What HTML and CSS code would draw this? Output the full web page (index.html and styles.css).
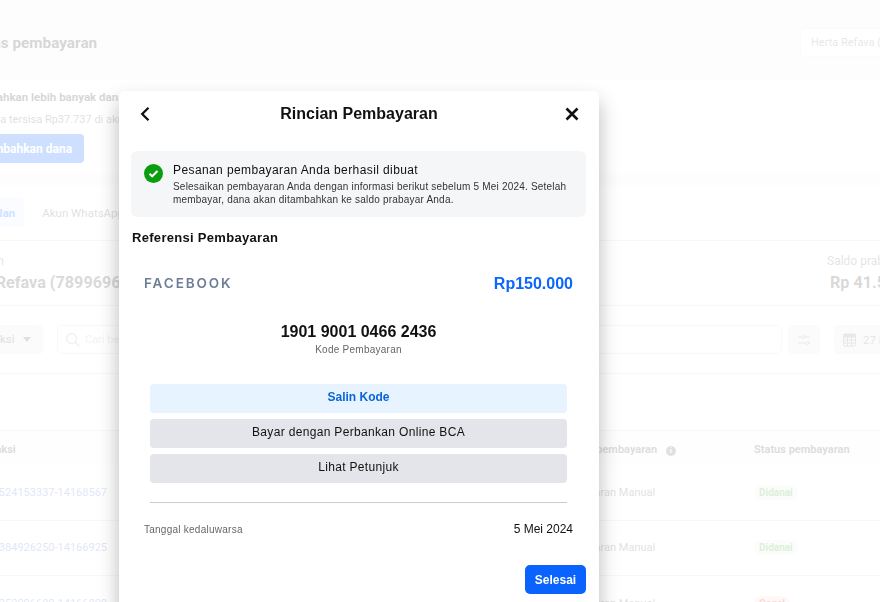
FILE: index.html
```html
<!DOCTYPE html>
<html lang="en">
  <head>
    <meta charset="UTF-8" />
    <meta name="viewport" content="width=device-width, initial-scale=1.0" />
    <title>Rincian Pembayaran</title>
    <link rel="stylesheet" href="styles.css">
  </head>
  <body>
    <div class="page">
      <header class="top-bar">
        <h1>Aktivitas pembayaran</h1>
        <div class="account-select">Herta Refava (7899696)</div>
      </header>

      <section class="banner">
        <div class="banner-title">Tambahkan lebih banyak dana</div>
        <div class="banner-text">Dana tersisa Rp37.737 di akun Anda</div>
        <button class="add-btn">Tambahkan dana</button>
      </section>

      <section class="tabs">
        <div class="tab tab-active">Penjualan</div>
        <div class="tab">Akun WhatsApp</div>
      </section>

      <section class="account-row">
        <div>
          <div class="account-label">Nama akun</div>
          <div class="account-name">Herta Refava (7899696)</div>
        </div>
        <div class="balance">
          <div class="account-label">Saldo prabayar</div>
          <div class="account-name balance-value">Rp 41.500</div>
        </div>
      </section>

      <section class="filters">
        <div class="filter-type">Transaksi <span class="caret"></span></div>
        <div class="search">
          <svg width="14" height="14" viewBox="0 0 14 14" fill="none" stroke="#a8a8a8" stroke-width="1.1"><circle cx="5.6" cy="5.6" r="5"/><path d="M9.2 9.2 13.5 13.5"/></svg>
          <span>Cari berdasarkan ID transaksi</span>
        </div>
        <div class="icon-btn">
          <svg width="14" height="12" viewBox="0 0 14 12" fill="none" stroke="#9a9a9a" stroke-width="1"><path d="M1 3h4M8 3h5M1 9h8M12 9h1"/><circle cx="6.5" cy="3" r="1.5"/><circle cx="10.5" cy="9" r="1.5"/></svg>
        </div>
        <div class="date-btn">
          <svg width="13" height="14" viewBox="0 0 13 14" fill="none" stroke="#8a8a8a" stroke-width="1"><rect x=".5" y="1" width="12" height="12" rx="1.5"/><path d="M.5 1.5h12V4H.5z" fill="#8a8a8a"/><path d="M.5 7h12M.5 10h12M4.5 4v9M8.5 4v9"/></svg>
          <span>27 Feb 2024</span>
        </div>
      </section>

      <div class="spacer"></div>

      <section class="table">
        <div class="table-row table-head">
          <div>ID transaksi</div>
          <div class="col-method">Metode pembayaran <span class="info-dot">i</span></div>
          <div>Status pembayaran</div>
        </div>
        <div class="table-row">
          <div class="tx-id">1714524153337-14168567</div>
          <div class="col-method">Pembayaran Manual</div>
          <div><span class="badge badge-ok">Didanai</span></div>
        </div>
        <div class="table-row">
          <div class="tx-id">1714384926250-14166925</div>
          <div class="col-method">Pembayaran Manual</div>
          <div><span class="badge badge-ok">Didanai</span></div>
        </div>
        <div class="table-row">
          <div class="tx-id">1714252096680-14166808</div>
          <div class="col-method">Pembayaran Manual</div>
          <div><span class="badge badge-fail">Gagal</span></div>
        </div>
      </section>
    </div>

    <div class="overlay"></div>

    <div class="modal">
      <div class="modal-head">
        <svg width="16" height="16" viewBox="0 0 16 16" fill="none" stroke="#111" stroke-width="2.3"><path d="M10.5 1.7 4.2 8l6.3 6.3"/></svg>
        <h2>Rincian Pembayaran</h2>
        <svg width="16" height="16" viewBox="0 0 16 16" fill="none" stroke="#111" stroke-width="2.6"><path d="M2.5 2.5l11 11M13.5 2.5l-11 11"/></svg>
      </div>

      <div class="alert">
        <svg class="alert-icon" width="19" height="19" viewBox="0 0 19 19"><circle cx="9.5" cy="9.5" r="9.5" fill="#0a9e0f"/><path d="M5.5 9.8 8.2 12.3 13.5 7" fill="none" stroke="#fff" stroke-width="2"/></svg>
        <div>
          <div class="alert-title">Pesanan pembayaran Anda berhasil dibuat</div>
          <div class="alert-text">Selesaikan pembayaran Anda dengan informasi berikut sebelum 5 Mei 2024. Setelah membayar, dana akan ditambahkan ke saldo prabayar Anda.</div>
        </div>
      </div>

      <h3>Referensi Pembayaran</h3>

      <div class="pay-row">
        <span class="brand">FACEBOOK</span>
        <span class="amount">Rp150.000</span>
      </div>

      <div class="code">1901 9001 0466 2436</div>
      <div class="code-label">Kode Pembayaran</div>

      <div class="actions">
        <button class="action-btn action-copy">Salin Kode</button>
        <button class="action-btn">Bayar dengan Perbankan Online BCA</button>
        <button class="action-btn">Lihat Petunjuk</button>
      </div>

      <div class="expiry">
        <span class="expiry-label">Tanggal kedaluwarsa</span>
        <span class="expiry-date">5 Mei 2024</span>
      </div>

      <div class="modal-foot">
        <button class="done-btn">Selesai</button>
      </div>
    </div>
  </body>
</html>
```

FILE: styles.css
```css
html,
body {
  height: 100%;
}

body {
  margin: 0;
  overflow: hidden;
  font-family: "Liberation Sans", Arial, sans-serif;
  background-color: #fff;
}

button {
  font-family: inherit;
  border: none;
  cursor: pointer;
}

/* page behind the dialog */
.page {
  width: 1160px;
  margin-left: -80px;
  font-family: Roboto, Arial, sans-serif;
  color: #444;
}

.top-bar {
  height: 80px;
  box-sizing: border-box;
  padding: 5px 0 0 28px;
  background-color: #f3f3f3;
  display: flex;
  align-items: center;
  justify-content: space-between;
}

.top-bar h1 {
  margin: 0;
  font-size: 15.3px;
  font-weight: 700;
  color: #333;
}

.account-select {
  width: 280px;
  height: 29px;
  box-sizing: border-box;
  line-height: 27px;
  padding-left: 10px;
  font-size: 11px;
  color: #888;
  background-color: #fff;
  border: 1px solid #e8e8e8;
  border-radius: 4px;
}

.banner {
  height: 105px;
  box-sizing: border-box;
  padding: 10px 0 0 48px;
  border-bottom: 12px solid #f3f3f3;
}

.banner-title {
  font-size: 11.5px;
  font-weight: 700;
  line-height: 15px;
  color: #333;
}

.banner-text {
  margin: 7px 0 0 13px;
  font-size: 11px;
  line-height: 15px;
  color: #666;
}

.add-btn {
  display: block;
  margin-top: 7px;
  width: 116px;
  height: 29px;
  font-family: Roboto, Arial, sans-serif;
  font-size: 12px;
  font-weight: 700;
  color: #fff;
  background-color: #0a62ff;
  border-radius: 4px;
}

.tabs {
  height: 56px;
  box-sizing: border-box;
  padding: 13px 0 0 35px;
  display: flex;
  align-items: flex-start;
  gap: 9px;
  border-bottom: 1px solid #ddd;
}

.tab {
  height: 29px;
  line-height: 30px;
  padding: 0 9px;
  font-size: 11.5px;
  color: #666;
  border-radius: 4px;
}

.tab-active {
  color: #0a62ff;
  font-weight: 700;
  background-color: #e7f0ff;
}

.account-row {
  height: 65px;
  box-sizing: border-box;
  padding: 13px 0 0 23px;
  display: flex;
  justify-content: space-between;
  border-bottom: 1px solid #ddd;
}

.account-label {
  font-size: 12px;
  line-height: 14px;
  color: #777;
}

.account-name {
  margin: 5px 0 0 8px;
  font-size: 16.2px;
  line-height: 20px;
  font-weight: 700;
  color: #444;
}

.balance {
  width: 253px;
}

.balance-value {
  margin-left: 3px;
}

.filters {
  height: 68px;
  box-sizing: border-box;
  padding: 19px 0 0 0;
  display: flex;
  gap: 14px;
  border-bottom: 1px solid #ddd;
}

.filter-type {
  width: 123px;
  height: 29px;
  box-sizing: border-box;
  padding-left: 45px;
  line-height: 29px;
  font-size: 11.5px;
  color: #555;
  background-color: #ececec;
  border-radius: 4px;
  display: flex;
  align-items: center;
  gap: 9px;
}

.caret {
  border-left: 4px solid transparent;
  border-right: 4px solid transparent;
  border-top: 5px solid #666;
}

.search {
  width: 725px;
  height: 29px;
  box-sizing: border-box;
  padding-left: 8px;
  border: 1px solid #ddd;
  border-radius: 5px;
  display: flex;
  align-items: center;
  gap: 5px;
  font-size: 11px;
  color: #bbb;
  margin-right: -8px;
}

.icon-btn {
  width: 32px;
  height: 29px;
  background-color: #ececec;
  border-radius: 4px;
  display: flex;
  align-items: center;
  justify-content: center;
}

.date-btn {
  width: 160px;
  height: 29px;
  box-sizing: border-box;
  padding-left: 9px;
  background-color: #ececec;
  border-radius: 4px;
  display: flex;
  align-items: center;
  gap: 7px;
  font-size: 11.5px;
  color: #777;
}

.spacer {
  height: 56px;
  border-bottom: 1px solid #ddd;
}

.table-row {
  height: 55.5px;
  box-sizing: border-box;
  display: grid;
  grid-template-columns: 187px 647px 1fr;
  align-items: center;
  font-size: 11px;
  color: #666;
  border-bottom: 1px solid #ddd;
}

.table-head {
  height: 34px;
  padding-top: 2px;
  font-weight: 700;
  color: #555;
  background-color: #fafafa;
  border-bottom: none;
}

.table-head > div:first-child {
  padding-left: 37px;
}

.tx-id {
  color: #6a7cdc;
  text-align: right;
}

.col-method {
  padding-left: 448px;
}

.table-head .col-method {
  padding-left: 449px;
  white-space: nowrap;
}

.info-dot {
  display: inline-block;
  width: 10px;
  height: 10px;
  margin-left: 6px;
  border-radius: 50%;
  background-color: #666;
  color: #fff;
  font-size: 8px;
  line-height: 10px;
  text-align: center;
}

.badge {
  display: inline-block;
  padding: 0 5px;
  height: 15px;
  line-height: 15px;
  font-size: 10px;
  font-weight: 700;
  border-radius: 8px;
}

.badge-ok {
  color: #5aa84a;
  background-color: #e6f5de;
}

.badge-fail {
  color: #d8452e;
  background-color: #fbdcd6;
}

.overlay {
  position: fixed;
  top: 0;
  left: 0;
  right: 0;
  bottom: 0;
  background-color: rgba(255, 255, 255, 0.8);
}

/* dialog */
.modal {
  position: absolute;
  top: 91px;
  left: 119px;
  width: 480px;
  height: 560px;
  box-sizing: border-box;
  padding: 0 13px 0 12px;
  background-color: #fff;
  border-radius: 6px 6px 0 0;
  box-shadow: 0 10px 20px rgba(0, 0, 0, 0.28);
  color: #111;
}

.modal-head {
  height: 46px;
  padding: 0 6px 0 7px;
  display: flex;
  align-items: center;
  justify-content: space-between;
}

.modal-head h2 {
  margin: 0;
  font-size: 16px;
  font-weight: 700;
}

.alert {
  margin-top: 14px;
  height: 66px;
  box-sizing: border-box;
  padding: 12px 12px 0 13px;
  background-color: #f5f6f7;
  border-radius: 6px;
  display: flex;
  gap: 10px;
}

.alert-icon {
  flex-shrink: 0;
  margin-top: 1px;
}

.alert-title {
  font-size: 12px;
  line-height: 15px;
  letter-spacing: 0.4px;
}

.alert-text {
  margin-top: 2px;
  font-size: 10px;
  line-height: 13px;
  letter-spacing: 0.2px;
  color: #333;
}

.modal h3 {
  margin: 13px 0 0 1px;
  font-size: 13px;
  line-height: 16px;
  font-weight: 700;
  letter-spacing: 0.3px;
}

.pay-row {
  margin-top: 28px;
  padding: 0 13px;
  height: 20px;
  display: flex;
  align-items: center;
  justify-content: space-between;
}

.brand {
  margin-top: -2px;
  font-family: Inter, Arial, sans-serif;
  font-size: 13.5px;
  font-weight: 600;
  letter-spacing: 1.9px;
  color: #6e7d96;
}

.amount {
  font-size: 16px;
  font-weight: 700;
  color: #0a66ff;
}

.code {
  margin-top: 28px;
  text-align: center;
  font-size: 16px;
  line-height: 20px;
  font-weight: 700;
}

.code-label {
  margin-top: 1px;
  text-align: center;
  font-size: 10px;
  line-height: 13px;
  letter-spacing: 0.25px;
  color: #666;
}

.actions {
  margin: 28px 19px 0 19px;
  padding-bottom: 19px;
  display: flex;
  flex-direction: column;
  gap: 6px;
  border-bottom: 1px solid #ccc;
}

.action-btn {
  height: 29px;
  padding: 0 0 3px 0;
  font-size: 12px;
  letter-spacing: 0.33px;
  color: #111;
  background-color: #e4e5ea;
  border-radius: 4px;
}

.action-copy {
  font-weight: 700;
  letter-spacing: 0;
  color: #0a66d8;
  background-color: #e7f3fe;
}

.expiry {
  margin-top: 19px;
  padding: 0 13px;
  display: flex;
  align-items: center;
  justify-content: space-between;
}

.expiry-label {
  font-size: 10px;
  letter-spacing: 0.25px;
  color: #666;
}

.expiry-date {
  font-size: 12px;
}

.modal-foot {
  margin-top: 29px;
  display: flex;
  justify-content: flex-end;
}

.done-btn {
  width: 61px;
  height: 29px;
  font-size: 12px;
  font-weight: 700;
  color: #fff;
  background-color: #0a62ff;
  border-radius: 5px;
}
```
